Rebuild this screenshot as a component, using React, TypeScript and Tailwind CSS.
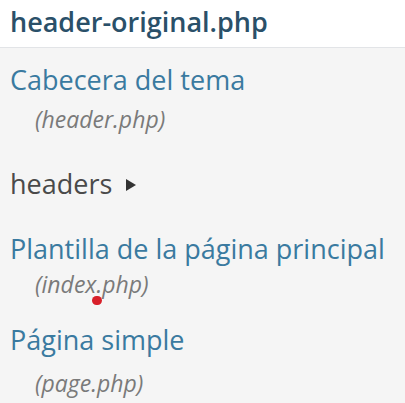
export default function App() {
  const font = { fontFamily: '"Open Sans", "Noto Sans", sans-serif' };
  return (
    <div className="w-[405px] h-[403px] overflow-hidden bg-[#f5f5f5]" style={font}>
      <div className="bg-white h-[48px] border-b border-[#e2e4e7] pl-[10px] pt-[4px]">
        <h2 className="text-[27px] leading-[36px] font-semibold text-[#2a5069]">header-original.php</h2>
      </div>
      <ul className="pl-[10px]">
        <li className="mt-[14px]">
          <a className="block text-[27px] leading-[36px] text-[#3a7aa0]">Cabecera del tema</a>
          <span className="block mt-[7px] pl-[25px] text-[23px] leading-[28px] italic text-[#7a7a7a]">(header.php)</span>
        </li>
        <li className="mt-[33px] flex items-center gap-[14px] text-[27px] leading-[36px] text-[#4a4a4a]">
          headers
          <svg width="10" height="12" viewBox="0 0 10 12" className="mt-[2px]"><path d="M0 0 L10 6 L0 12 Z" fill="#333" /></svg>
        </li>
        <li className="mt-[29px]">
          <a className="block text-[27px] leading-[36px] text-[#3a7aa0]">Plantilla de la página principal</a>
          <span className="relative block mt-[3px] pl-[25px] text-[23px] leading-[28px] italic text-[#7a7a7a]">
            (index.php)
            <span className="absolute left-[82px] top-[26px] w-[10px] h-[9px] rounded-full bg-[#d8202a]" />
          </span>
        </li>
        <li className="mt-[24px]">
          <a className="block text-[27px] leading-[36px] text-[#3a7aa0]">Página simple</a>
          <span className="block mt-[11px] pl-[25px] text-[23px] leading-[28px] italic text-[#7a7a7a]">(page.php)</span>
        </li>
      </ul>
    </div>
  );
}
